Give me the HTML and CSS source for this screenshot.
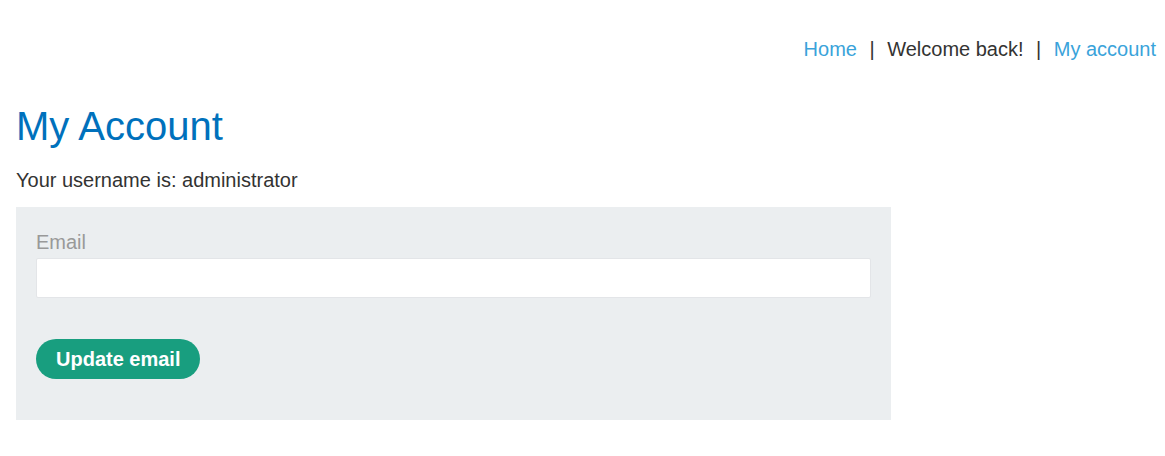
FILE: index.html
```html
<!DOCTYPE html>
<html lang="en">
<head>
<meta charset="utf-8">
<title>My Account</title>
<link rel="stylesheet" href="styles.css">
</head>
<body>
<div class="page">
  <header class="top-links">
    <a class="nav-link" href="#">Home</a>
    <span class="sep">|</span>
    <span class="welcome">Welcome back!</span>
    <span class="sep">|</span>
    <a class="nav-link" href="#">My account</a>
  </header>
  <main class="content">
    <h1 class="title">My Account</h1>
    <p class="username">Your username is: administrator</p>
    <form class="panel">
      <label class="field-label" for="email">Email</label>
      <input class="field-input" id="email" type="email">
      <button class="btn" type="button">Update email</button>
    </form>
  </main>
</div>
</body>
</html>
```
FILE: styles.css
```css
html, body {
  margin: 0;
  padding: 0;
  background: #ffffff;
}
body {
  font-family: "Liberation Sans", Arial, sans-serif;
  font-size: 20px;
  color: #333332;
}
.page {
  padding: 38px 9px 0 16px;
}
.top-links {
  display: flex;
  justify-content: flex-end;
  align-items: baseline;
  line-height: 23px;
  height: 23px;
}
.nav-link {
  color: #3aa3da;
  text-decoration: none;
}
.welcome {
  color: #333332;
}
.sep {
  color: #333332;
  margin: 0 12.5px;
}
.content {
  padding-top: 41px;
}
.title {
  margin: 0;
  font-size: 40px;
  font-weight: normal;
  line-height: 48px;
  color: #0071bc;
}
.username {
  margin: 16px 0 0;
  line-height: 28px;
}
.panel {
  margin-top: 13px;
  width: 875px;
  box-sizing: border-box;
  background: #ebeef0;
  padding: 20px 20px 41px;
  display: flex;
  flex-direction: column;
  align-items: flex-start;
}
.field-label {
  color: #999999;
  line-height: 30px;
  margin-bottom: 1px;
}
.field-input {
  box-sizing: border-box;
  width: 100%;
  height: 40px;
  margin: 0;
  border: 1px solid #e3e5e8;
  border-radius: 2px;
  background: #ffffff;
  font-family: inherit;
  font-size: 20px;
  padding: 0 10px;
}
.btn {
  margin-top: 41px;
  height: 40px;
  padding: 0 20px;
  border: none;
  border-radius: 20px;
  background: #189e7f;
  color: #ffffff;
  font-family: "Liberation Sans", Arial, sans-serif;
  font-size: 20px;
  font-weight: bold;
  cursor: pointer;
}
```
